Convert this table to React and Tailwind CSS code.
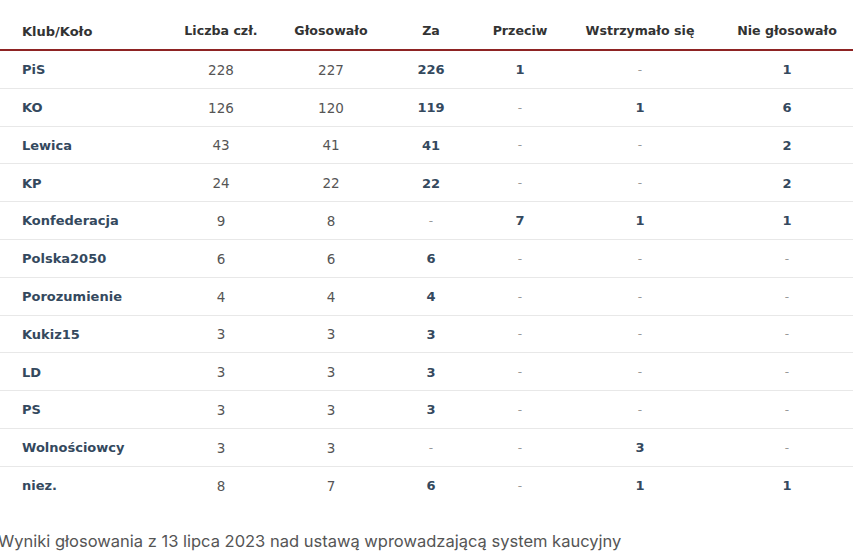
import React from "react";

const rows = [
  ["PiS", "228", "227", "226", "1", "-", "1"],
  ["KO", "126", "120", "119", "-", "1", "6"],
  ["Lewica", "43", "41", "41", "-", "-", "2"],
  ["KP", "24", "22", "22", "-", "-", "2"],
  ["Konfederacja", "9", "8", "-", "7", "1", "1"],
  ["Polska2050", "6", "6", "6", "-", "-", "-"],
  ["Porozumienie", "4", "4", "4", "-", "-", "-"],
  ["Kukiz15", "3", "3", "3", "-", "-", "-"],
  ["LD", "3", "3", "3", "-", "-", "-"],
  ["PS", "3", "3", "3", "-", "-", "-"],
  ["Wolnościowcy", "3", "3", "-", "-", "3", "-"],
  ["niez.", "8", "7", "6", "-", "1", "1"],
];

const headers = ["Klub/Koło", "Liczba czł.", "Głosowało", "Za", "Przeciw", "Wstrzymało się", "Nie głosowało"];

const cols = "grid grid-cols-[166px_110px_110px_90px_88px_152px_142px]";

function Cell({ v, i }) {
  if (i === 0) {
    return <div className="pl-[22px] font-bold text-[#34495e] flex items-center">{v}</div>;
  }
  if (v === "-") {
    return <div className="text-center text-[#999] text-[12px] flex items-center justify-center">-</div>;
  }
  if (i <= 2) {
    return <div className="text-center text-[#555] text-[13.5px] flex items-center justify-center">{v}</div>;
  }
  return <div className="text-center font-bold text-[#34495e] flex items-center justify-center">{v}</div>;
}

export default function App() {
  return (
    <div className="w-[853px] h-[552px] bg-white overflow-hidden relative">
      <div className="font-['DejaVu_Sans',Verdana,sans-serif] text-[13px]">
        <div className={`${cols} h-[49px] items-center pt-[14px] font-bold text-[12.6px] text-[#333]`}>
          {headers.map((h, i) => (
            <div key={i} className={i === 0 ? "pl-[22px] text-[13px]" : "text-center"}>{h}</div>
          ))}
        </div>
        <div className="h-[2px] bg-[#8e2323]" />
        {rows.map((r, ri) => (
          <div
            key={ri}
            className={`${cols} h-[37.8px] pt-[1px] ${ri < rows.length - 1 ? "border-b border-[#e8e8e8]" : ""}`}
          >
            {r.map((v, i) => (
              <Cell key={i} v={v} i={i} />
            ))}
          </div>
        ))}
      </div>
      <div className="mt-[24px] ml-[-2px] font-['Inter',sans-serif] text-[16.5px] text-[#555] whitespace-nowrap">
        Wyniki głosowania z 13 lipca 2023 nad ustawą wprowadzającą system kaucyjny
      </div>
    </div>
  );
}
